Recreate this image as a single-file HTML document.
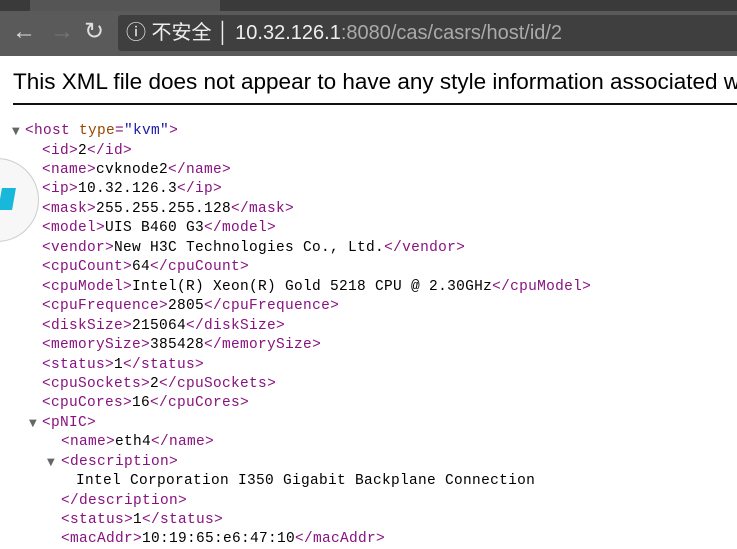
<!DOCTYPE html>
<html><head><meta charset="utf-8"><style>
html,body{margin:0;width:737px;height:549px;overflow:hidden}
body{background:#fff;position:relative;font-family:"Liberation Sans","Noto Sans CJK SC",sans-serif}
.tabs{position:absolute;left:0;top:0;width:737px;height:11px;background:#3a3a3a}
.tab{position:absolute;left:30px;top:0;width:190px;height:11px;background:#555}
.tb{position:absolute;left:0;top:11px;width:737px;height:45px;background:#5a5a5a}
.addr{position:absolute;left:118px;top:15px;width:619px;height:36px;background:#3f3f3f;border-radius:3px 0 0 3px;color:#eee;font-size:20px;line-height:36px;overflow:hidden;white-space:nowrap}
.nav{position:absolute;top:16px;font-size:24px;color:#ddd;line-height:32px}
.hdrw{position:absolute;left:13px;top:69px;width:724px;height:30px;overflow:hidden}
.hdr{font-size:22.5px;color:#000;white-space:nowrap}
.hr{position:absolute;left:13px;top:103px;width:724px;height:2px;background:#111}
.l{position:absolute;font-family:"Liberation Mono",monospace;font-size:14.5px;letter-spacing:0.3px;line-height:19px;white-space:pre;color:#000}
.t{color:#881280}.a{color:#994500}.v{color:#1a1aa6}
.ar{position:absolute;font-size:10px;color:#666;font-family:"DejaVu Sans",sans-serif}
.circ{position:absolute;left:-45px;top:158px;width:82px;height:82px;border-radius:50%;border:1px solid #ccc;background:#f7f7f7}
.cy{position:absolute;left:0;top:188px;width:14px;height:22px;background:#19b7d9;transform:skewX(-10deg)}
</style></head><body>
<div class="tabs"><div class="tab"></div></div>
<div class="tb"></div>
<div class="nav" style="left:12px">←</div>
<div class="nav" style="left:50px;color:#777">→</div>
<div class="nav" style="left:84px">↻</div>
<div class="addr"><span style="margin-left:8px">ⓘ 不安全 │ 10.32.126.1<span style="color:#aaa">:8080/cas/casrs/host/id/2</span></span></div>
<div class="hdrw"><div class="hdr">This XML file does not appear to have any style information associated with it.</div></div>
<div class="hr"></div>
<div class="circ"></div><div class="cy"></div>
<div class="ar" style="left:12px;top:126px">▼</div>
<div class="l" style="left:25px;top:122px"><span class="t">&lt;host </span><span class="a">type</span><span class="t">=</span><span class="v">"kvm"</span><span class="t">&gt;</span></div>
<div class="l" style="left:42px;top:142px"><span class="t">&lt;id&gt;</span>2<span class="t">&lt;/id&gt;</span></div>
<div class="l" style="left:42px;top:161px"><span class="t">&lt;name&gt;</span>cvknode2<span class="t">&lt;/name&gt;</span></div>
<div class="l" style="left:42px;top:180px"><span class="t">&lt;ip&gt;</span>10.32.126.3<span class="t">&lt;/ip&gt;</span></div>
<div class="l" style="left:42px;top:200px"><span class="t">&lt;mask&gt;</span>255.255.255.128<span class="t">&lt;/mask&gt;</span></div>
<div class="l" style="left:42px;top:219px"><span class="t">&lt;model&gt;</span>UIS B460 G3<span class="t">&lt;/model&gt;</span></div>
<div class="l" style="left:42px;top:239px"><span class="t">&lt;vendor&gt;</span>New H3C Technologies Co., Ltd.<span class="t">&lt;/vendor&gt;</span></div>
<div class="l" style="left:42px;top:258px"><span class="t">&lt;cpuCount&gt;</span>64<span class="t">&lt;/cpuCount&gt;</span></div>
<div class="l" style="left:42px;top:278px"><span class="t">&lt;cpuModel&gt;</span>Intel(R) Xeon(R) Gold 5218 CPU @ 2.30GHz<span class="t">&lt;/cpuModel&gt;</span></div>
<div class="l" style="left:42px;top:297px"><span class="t">&lt;cpuFrequence&gt;</span>2805<span class="t">&lt;/cpuFrequence&gt;</span></div>
<div class="l" style="left:42px;top:317px"><span class="t">&lt;diskSize&gt;</span>215064<span class="t">&lt;/diskSize&gt;</span></div>
<div class="l" style="left:42px;top:336px"><span class="t">&lt;memorySize&gt;</span>385428<span class="t">&lt;/memorySize&gt;</span></div>
<div class="l" style="left:42px;top:356px"><span class="t">&lt;status&gt;</span>1<span class="t">&lt;/status&gt;</span></div>
<div class="l" style="left:42px;top:375px"><span class="t">&lt;cpuSockets&gt;</span>2<span class="t">&lt;/cpuSockets&gt;</span></div>
<div class="l" style="left:42px;top:394px"><span class="t">&lt;cpuCores&gt;</span>16<span class="t">&lt;/cpuCores&gt;</span></div>
<div class="ar" style="left:29px;top:418px">▼</div>
<div class="l" style="left:42px;top:414px"><span class="t">&lt;pNIC&gt;</span></div>
<div class="l" style="left:61px;top:433px"><span class="t">&lt;name&gt;</span>eth4<span class="t">&lt;/name&gt;</span></div>
<div class="ar" style="left:47px;top:457px">▼</div>
<div class="l" style="left:61px;top:453px"><span class="t">&lt;description&gt;</span></div>
<div class="l" style="left:76px;top:472px">Intel Corporation I350 Gigabit Backplane Connection</div>
<div class="l" style="left:61px;top:492px"><span class="t">&lt;/description&gt;</span></div>
<div class="l" style="left:61px;top:511px"><span class="t">&lt;status&gt;</span>1<span class="t">&lt;/status&gt;</span></div>
<div class="l" style="left:61px;top:530px"><span class="t">&lt;macAddr&gt;</span>10:19:65:e6:47:10<span class="t">&lt;/macAddr&gt;</span></div>
</body></html>
